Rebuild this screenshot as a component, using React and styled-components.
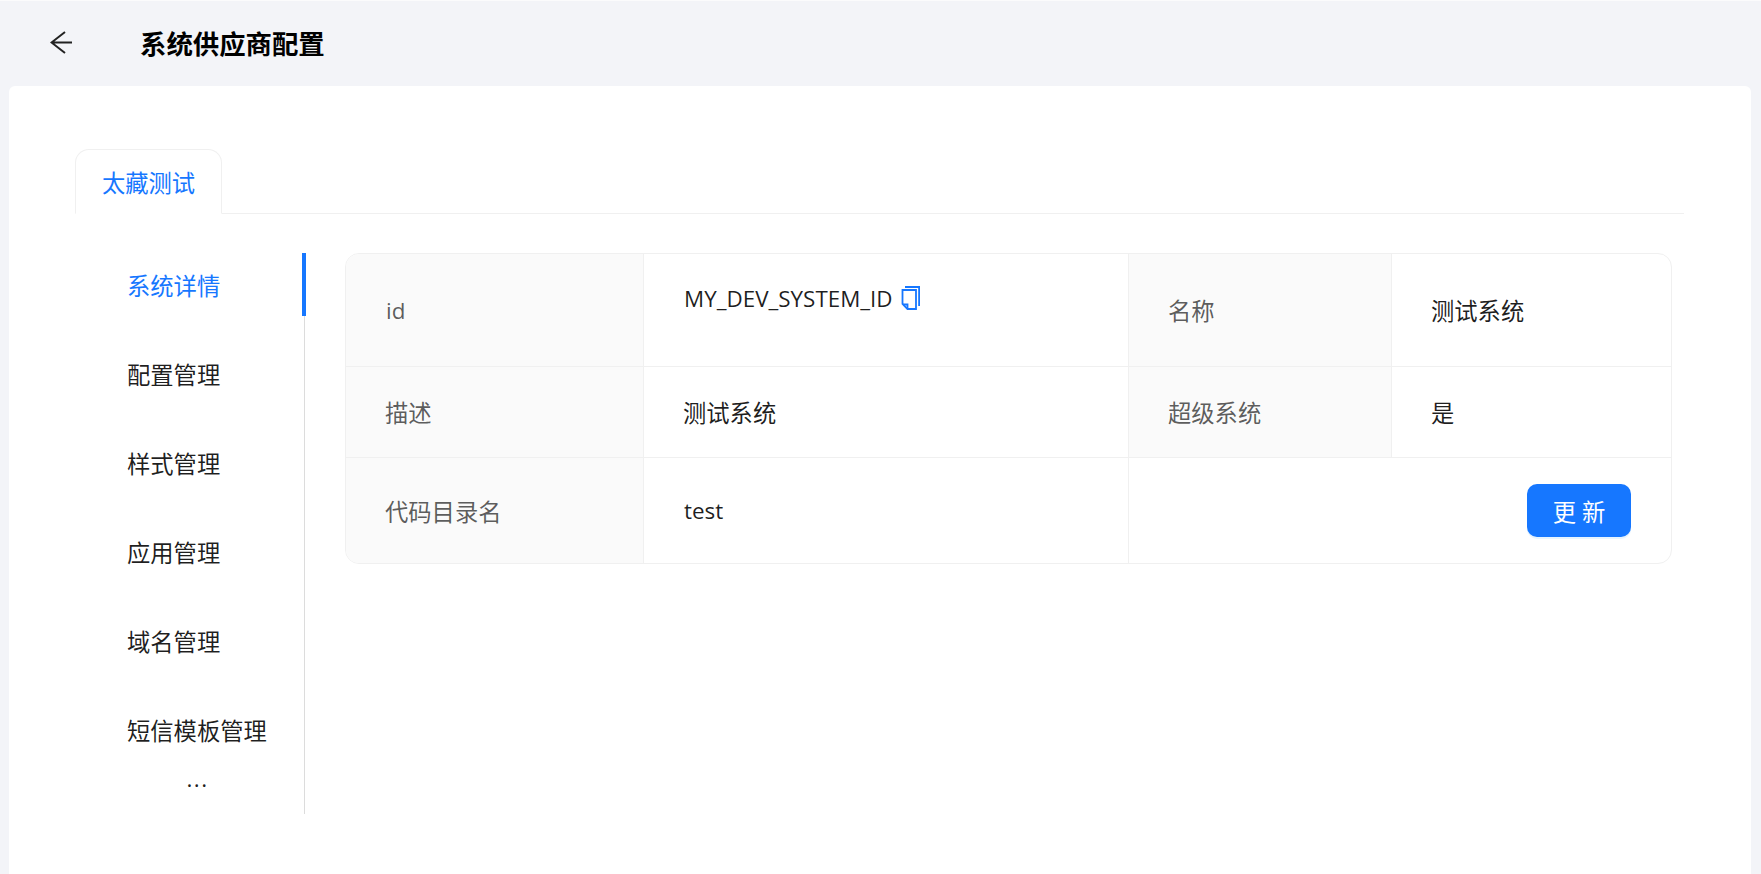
import React from "react";
import styled, { createGlobalStyle } from "styled-components";

const GlobalStyle = createGlobalStyle`
  html, body {
    margin: 0;
    height: 100%;
  }
  body {
    background: #f3f4f8;
    font-family: "Open Sans", "Noto Sans CJK SC", sans-serif;
    color: rgba(0, 0, 0, 0.88);
  }
`;

const Page = styled.div`
  height: 874px;
  display: flex;
  flex-direction: column;
  overflow: hidden;
  border-top: 1px solid #fbfbfc;
  box-sizing: border-box;
`;

const Header = styled.header`
  height: 85px;
  flex: none;
  display: flex;
  align-items: center;
  padding-left: 50px;
  padding-bottom: 2px;
  box-sizing: border-box;
`;

const BackButton = styled.button`
  width: 23px;
  height: 23px;
  padding: 0;
  border: none;
  background: none;
  color: #222;
  margin-right: 67px;
  display: flex;
`;

const Title = styled.h1`
  margin: 0;
  font-size: 26.4px;
  font-weight: 700;
  color: #000;
`;

const Card = styled.main`
  flex: 1;
  margin: 0 10px 0 9px;
  padding: 63px 67px 0 66px;
  background: #fff;
  border-radius: 6px 6px 0 0;
`;

const TabBar = styled.div`
  height: 64px;
  display: flex;
  border-bottom: 1px solid #f0f0f0;
`;

const Tab = styled.div`
  width: 147px;
  height: 65px;
  box-sizing: border-box;
  display: flex;
  align-items: center;
  justify-content: center;
  font-size: 23.3px;
  color: #1677ff;
  background: #fff;
  border: 1px solid #f0f0f0;
  border-bottom-color: #fff;
  border-radius: 14px 14px 0 0;
`;

const Body = styled.div`
  display: flex;
  margin-top: 39px;
`;

const SideMenu = styled.nav`
  width: 230px;
  height: 561px;
  flex: none;
  margin-right: 40px;
  padding-left: 15px;
  box-sizing: border-box;
  display: flex;
  flex-direction: column;
  gap: 26px;
  position: relative;
  border-right: 1px solid #dcdcdc;
`;

const MenuItem = styled.div`
  height: 63px;
  flex: none;
  display: flex;
  align-items: center;
  padding-left: 37px;
  font-size: 23.3px;
  color: ${(p) => (p.$active ? "#1677ff" : "rgba(0, 0, 0, 0.88)")};
`;

const ActiveBar = styled.span`
  position: absolute;
  top: 0;
  right: -2px;
  width: 4px;
  height: 63px;
  background: #1677ff;
`;

const More = styled.div`
  margin-top: -19px;
  width: 215px;
  text-align: center;
  font-size: 22.5px;
  line-height: 22px;
  letter-spacing: 1.5px;
`;

const Table = styled.div`
  width: 1327px;
  height: 311px;
  box-sizing: border-box;
  border: 1px solid #f0f0f0;
  border-radius: 14px;
  overflow: hidden;
  display: grid;
  grid-template-columns: 298px 485px 263px 1fr;
  grid-template-rows: 113px 91px 1fr;
  font-size: 23.3px;
`;

const Cell = styled.div`
  display: flex;
  align-items: center;
  padding: 0 39px;
  box-sizing: border-box;
  border-right: 1px solid #f0f0f0;
  border-bottom: 1px solid #f0f0f0;
  &:nth-child(4n) {
    border-right: none;
  }
`;

const Label = styled(Cell)`
  background: #fafafa;
  color: rgba(0, 0, 0, 0.65);
`;

const Latin = styled.span`
  font-size: 22.4px;
  padding-left: 1px;
`;

const IdCell = styled(Cell)`
  align-items: flex-start;
  padding-top: 29px;
  gap: 8px;
`;

const ActionCell = styled(Cell)`
  grid-column: span 2;
  justify-content: flex-end;
  border-right: none;
  border-bottom: none;
  padding-right: 40px;
`;

const LastLabel = styled(Label)`
  border-bottom: none;
`;

const LastValue = styled(Cell)`
  border-bottom: none;
`;

const CopyIcon = styled.svg`
  width: 19px;
  height: 24px;
  flex: none;
  margin-top: 3px;
  color: #1677ff;
`;

const UpdateButton = styled.button`
  width: 104px;
  height: 53px;
  border: none;
  border-radius: 10px;
  background: #1677ff;
  color: #fff;
  font-family: inherit;
  font-size: 23.3px;
  letter-spacing: 6px;
  text-indent: 6px;
  box-shadow: 0 2px 0 rgba(5, 145, 255, 0.1);
`;

const menu = ["系统详情", "配置管理", "样式管理", "应用管理", "域名管理", "短信模板管理"];

export default function App() {
  return (
    <Page>
      <GlobalStyle />
      <Header>
        <BackButton aria-label="back">
          <svg width="23" height="23" viewBox="0 0 23 23" fill="none" stroke="currentColor" strokeWidth="2">
            <path d="M22 11.5H1.5M15 1L1.5 11.5L15 22" />
          </svg>
        </BackButton>
        <Title>系统供应商配置</Title>
      </Header>
      <Card>
        <TabBar>
          <Tab>太藏测试</Tab>
        </TabBar>
        <Body>
          <SideMenu>
            <ActiveBar />
            {menu.map((name, i) => (
              <MenuItem key={name} $active={i === 0}>
                {name}
              </MenuItem>
            ))}
            <More>...</More>
          </SideMenu>
          <Table>
            <Label>
              <Latin>id</Latin>
            </Label>
            <IdCell>
              <Latin>MY_DEV_SYSTEM_ID</Latin>
              <CopyIcon viewBox="0 0 19 24" fill="none" stroke="currentColor" strokeWidth="1.8">
                <path d="M4 1h14.100v19" />
                <path d="M1.500 4h13.500v19H6.500L1.500 18z" />
                <path d="M2 18.500h4.500V23" />
              </CopyIcon>
            </IdCell>
            <Label>名称</Label>
            <Cell>测试系统</Cell>
            <Label>描述</Label>
            <Cell>测试系统</Cell>
            <Label>超级系统</Label>
            <Cell>是</Cell>
            <LastLabel>代码目录名</LastLabel>
            <LastValue>
              <Latin>test</Latin>
            </LastValue>
            <ActionCell>
              <UpdateButton>更新</UpdateButton>
            </ActionCell>
          </Table>
        </Body>
      </Card>
    </Page>
  );
}
